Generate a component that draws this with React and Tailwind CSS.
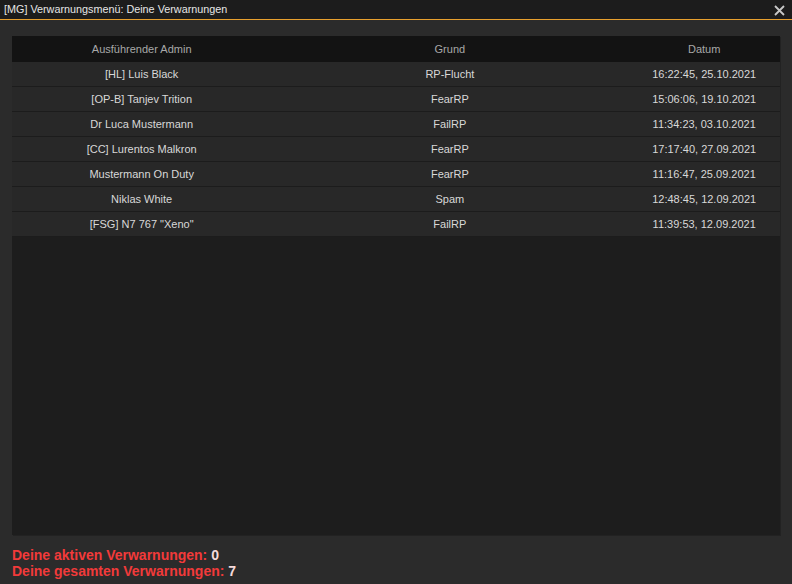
import React from "react";

const rows = [
  ["[HL] Luis Black", "RP-Flucht", "16:22:45, 25.10.2021"],
  ["[OP-B] Tanjev Trition", "FearRP", "15:06:06, 19.10.2021"],
  ["Dr Luca Mustermann", "FailRP", "11:34:23, 03.10.2021"],
  ["[CC] Lurentos Malkron", "FearRP", "17:17:40, 27.09.2021"],
  ["Mustermann On Duty", "FearRP", "11:16:47, 25.09.2021"],
  ["Niklas White", "Spam", "12:48:45, 12.09.2021"],
  ['[FSG] N7 767 "Xeno"', "FailRP", "11:39:53, 12.09.2021"],
];

export default function App() {
  return (
    <div
      className="w-[792px] h-[584px] bg-[#2b2b2b] flex flex-col overflow-hidden"
      style={{ fontFamily: '"Liberation Sans", Arial, sans-serif' }}
    >
      <div className="h-[19px] bg-[#1c1c1c] flex items-center justify-between pl-[4px] pr-[7px] shrink-0">
        <span className="text-[10.8px] text-[#e6e6e6] leading-none">[MG] Verwarnungsmenü: Deine Verwarnungen</span>
        <svg width="11" height="11" viewBox="0 0 11 11" className="mt-[1px]">
          <path d="M1 1 L10 10 M10 1 L1 10" stroke="#c8c8c8" strokeWidth="1.8" />
        </svg>
      </div>
      <div className="h-[1px] bg-[#e8a02e] shrink-0" />
      <div className="flex-1 flex flex-col px-[12px] pt-[16px]">
        <div className="h-[499px] bg-[#1d1d1d] flex flex-col shadow-[1px_1px_0_#222]">
          <div className="h-[26px] bg-[#131313] flex items-center text-[11px] text-[#a8a8a8]">
            <div className="w-[260px] text-center">Ausführender Admin</div>
            <div className="w-[358px] text-center">Grund</div>
            <div className="w-[152px] text-center">Datum</div>
          </div>
          {rows.map((r, i) => (
            <div
              key={i}
              className="h-[25px] bg-[#282828] border-b border-[#1c1c1c] flex items-center text-[11px] text-[#d8d8d8]"
            >
              <div className="w-[260px] text-center">{r[0]}</div>
              <div className="w-[358px] text-center">{r[1]}</div>
              <div className="w-[152px] text-center">{r[2]}</div>
            </div>
          ))}
        </div>
        <div className="mt-[12px] text-[14px] font-bold leading-[16px] text-[#f23a3a]">
          <div>
            Deine aktiven Verwarnungen: <span className="text-[#f5dada]">0</span>
          </div>
          <div>
            Deine gesamten Verwarnungen: <span className="text-[#f5dada]">7</span>
          </div>
        </div>
      </div>
    </div>
  );
}
